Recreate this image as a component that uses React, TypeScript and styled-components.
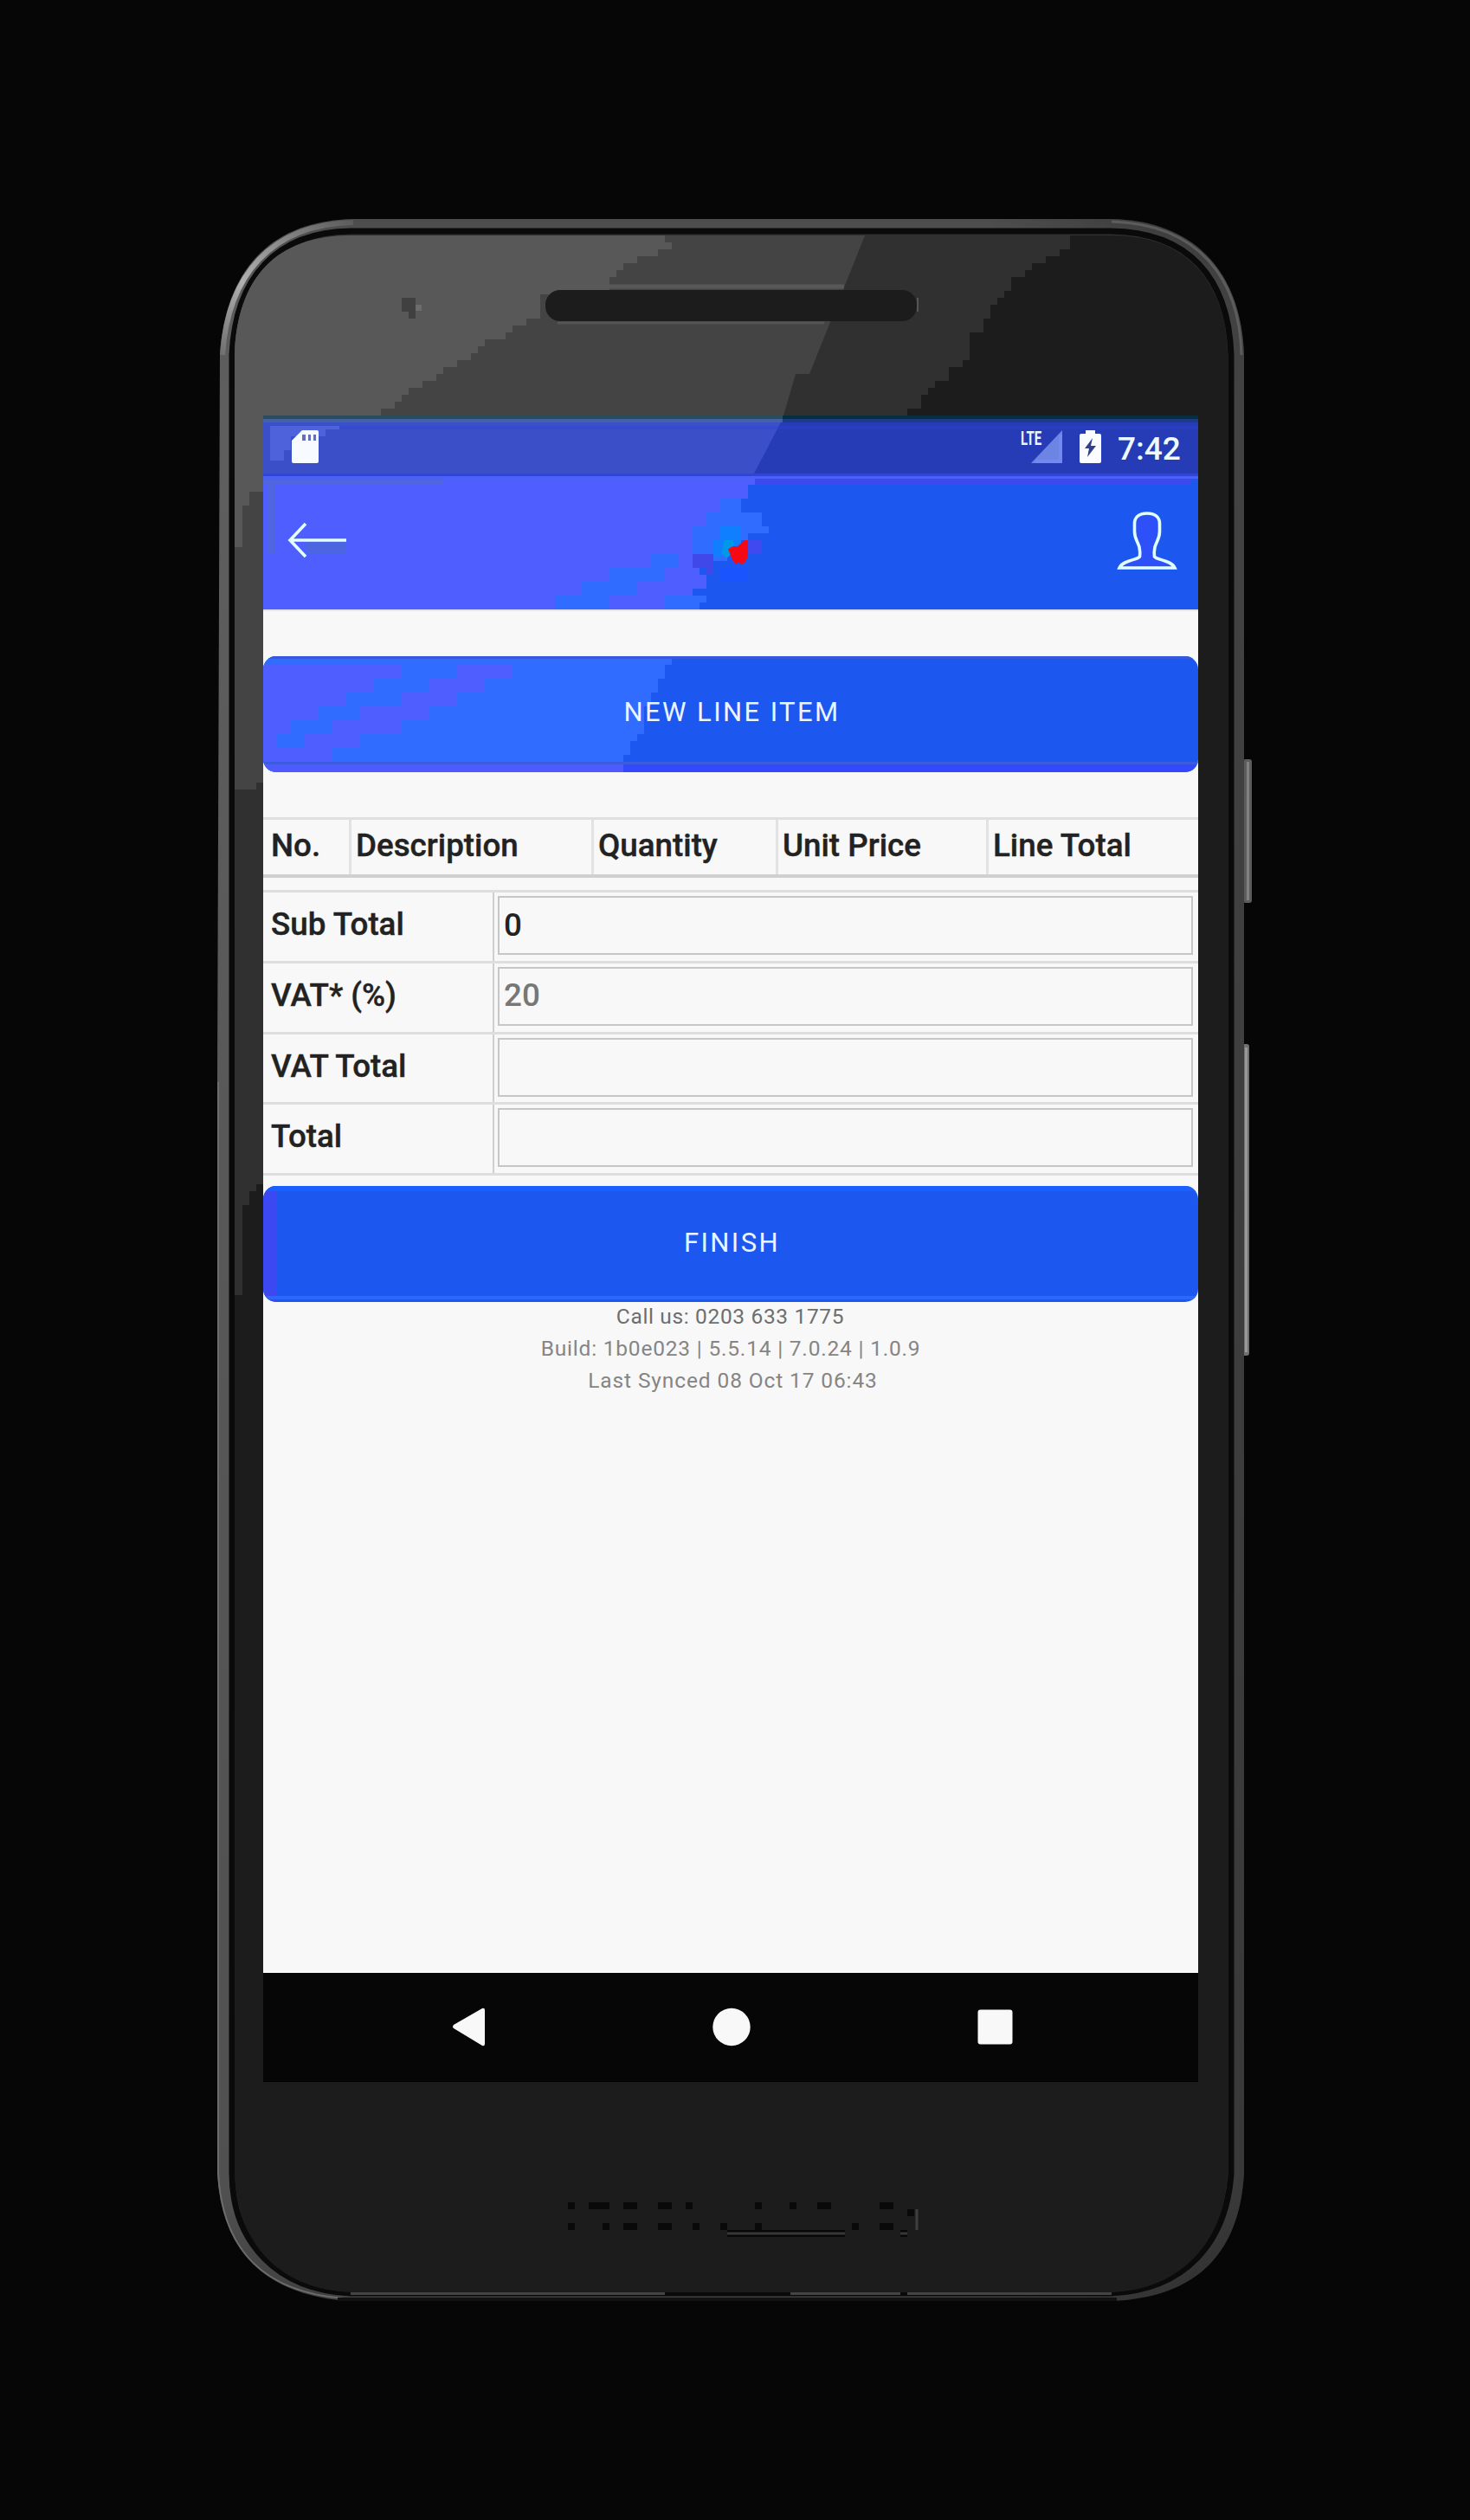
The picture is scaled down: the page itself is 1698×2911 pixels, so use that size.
import React from 'react';
import styled, { createGlobalStyle } from 'styled-components';

const GlobalStyle = createGlobalStyle`
  * { box-sizing: border-box; }
  body { margin: 0; background: #060606; font-family: Roboto, "Liberation Sans", sans-serif; }
`;

const Stage = styled.main`
  position: relative;
  width: 1698px;
  height: 2911px;
  padding: 484px 314px 0 304px;
  background: #060606;
  overflow: hidden;
`;

const DeviceArt = styled.svg`
  position: absolute;
  inset: 0;
  width: 1698px;
  height: 2911px;
`;

const Screen = styled.section`
  position: relative;
  display: flex;
  flex-direction: column;
  width: 1080px;
  height: 1920px;
  background: #f8f8f8;
`;

const Glare = styled.svg`
  position: absolute;
  inset: 0;
  width: 100%;
  height: 100%;
`;

const StatusBar = styled.div`
  position: relative;
  display: flex;
  align-items: flex-start;
  height: 63px;
  padding: 13px 18px 0 33px;
  background: #263bb6;
`;

const StatusIcon = styled.svg<{ $gap: number }>`
  position: relative;
  display: block;
  flex: none;
  margin-right: ${(p) => p.$gap}px;
`;

const Network = styled.span`
  position: relative;
  margin-left: auto;
  width: 12px;
  height: 20px;
  font: 700 22px/20px Roboto, sans-serif;
  color: #e6f6ff;
  white-space: nowrap;
  z-index: 1;
`;

const Condensed = styled.span`
  display: inline-block;
  transform: scaleX(0.68);
  transform-origin: 0 50%;
`;

const Clock = styled.time`
  position: relative;
  width: 75px;
  font: 500 37px/43px Roboto, sans-serif;
  color: #effaff;
  white-space: nowrap;
`;

const Header = styled.header`
  position: relative;
  display: flex;
  align-items: flex-start;
  justify-content: space-between;
  height: 157px;
  padding: 44px 24px 0 28px;
  background: #1c58f0;
`;

const HeaderIcon = styled.svg<{ $drop: number }>`
  position: relative;
  display: block;
  flex: none;
  margin-top: ${(p) => p.$drop}px;
`;

const Body = styled.div`
  display: flex;
  flex: 1;
  flex-direction: column;
  border-top: 2px solid #e6e4ec;
  padding-top: 52px;
`;

const ActionButton = styled.button`
  position: relative;
  flex: none;
  width: 100%;
  height: 134px;
  padding: 0;
  border: 0;
  border-radius: 15px;
  overflow: hidden;
  background: #1c58f0;
`;

const ButtonLabel = styled.span<{ $shift?: number }>`
  position: relative;
  top: ${(p) => p.$shift ?? 0}px;
  font: 400 31px/40px Roboto, sans-serif;
  letter-spacing: 2.4px;
  margin-left: 3px;
  color: #eaf6ff;
`;

const LineItems = styled.div`
  display: grid;
  grid-template-columns: 102px 280px 213px 243px 1fr;
  flex: none;
  height: 70px;
  margin: 52px 0 14px;
  border-top: 3px solid #e0e0e0;
  border-bottom: 4px solid #d0d0d0;
`;

const ColumnHead = styled.div`
  padding: 8px 0 0 5px;
  border-right: 3px solid #e2e2e2;
  font: 500 36.75px/43px Roboto, sans-serif;
  -webkit-text-stroke: 0.4px #222;
  color: #222;
  white-space: nowrap;
  &:first-child { padding-left: 9px; }
  &:last-child { border-right: 0; }
`;

const Totals = styled.div`
  display: grid;
  grid-template-rows: repeat(4, 81.75px);
  flex: none;
  height: 330px;
  margin-bottom: 12px;
  border-bottom: 3px solid #dedede;
`;

const TotalRow = styled.label`
  display: grid;
  grid-template-columns: 267px 1fr;
  border-top: 3px solid #dedede;
`;

const TotalLabel = styled.span`
  padding: 15px 0 0 9px;
  border-right: 2px solid #cfcfcf;
  font: 500 36.75px/43px Roboto, sans-serif;
  -webkit-text-stroke: 0.4px #222;
  color: #222;
`;

const Field = styled.input`
  width: calc(100% - 10px);
  height: 68px;
  margin: 4px 6px 5px 4px;
  padding: 0 0 2px 5px;
  border: 2px solid #c6c6c6;
  outline: 0;
  border-radius: 0;
  background: #f8f8f8;
  font: 500 36.75px/43px Roboto, sans-serif;
  color: #222;
  &::placeholder { color: #777; opacity: 1; }
`;

const Footer = styled.footer`
  display: flex;
  flex-direction: column;
  flex: 1;
  align-items: center;
  margin-top: -2px;
`;

const FooterLine = styled.p<{ $tone?: string; $track: number; $nudge: number }>`
  margin: 0 0 0 ${(p) => p.$nudge}px;
  font: 400 24.5px/37px Roboto, sans-serif;
  letter-spacing: ${(p) => p.$track}px;
  color: ${(p) => p.$tone ?? '#858585'};
`;

const NavBar = styled.nav`
  display: flex;
  justify-content: center;
  gap: 260px;
  height: 125px;
  padding-top: 40px;
  background: #060606;
`;

const NavIcon = styled.svg`
  display: block;
  width: 45px;
  height: 45px;
`;

const grille: Array<[number, number, number]> = [
  [656, 2544, 8], [680, 2544, 24], [720, 2544, 16], [760, 2544, 16], [792, 2544, 8],
  [872, 2544, 8], [912, 2544, 8], [944, 2544, 16], [1016, 2544, 16], [1048, 2552, 8],
  [656, 2568, 8], [696, 2568, 8], [720, 2568, 16], [760, 2568, 16], [800, 2568, 8],
  [832, 2568, 8], [872, 2568, 8], [984, 2568, 8], [1016, 2568, 16],
];

function Device() {
  return (
    <DeviceArt viewBox="0 0 1698 2911" aria-hidden="true">
      <defs>
        <linearGradient id="rim" x1="0" y1="0" x2="0" y2="1">
          <stop offset="0" stopColor="#4c4c4c" />
          <stop offset=".03" stopColor="#5a5a5a" />
          <stop offset=".09" stopColor="#5e5e5e" />
          <stop offset=".95" stopColor="#505050" />
          <stop offset="1" stopColor="#404040" />
        </linearGradient>
        <linearGradient id="rimRight" x1="0" y1="0" x2="1" y2="0">
          <stop offset="0" stopColor="#000" stopOpacity="0" />
          <stop offset=".75" stopColor="#000" stopOpacity="0" />
          <stop offset="1" stopColor="#000" stopOpacity=".3" />
        </linearGradient>
        <linearGradient id="leftGlint" x1="0" y1="1" x2="1" y2="0">
          <stop offset="0" stopColor="#707070" />
          <stop offset=".35" stopColor="#b0b0b0" />
          <stop offset="1" stopColor="#5c5c5c" />
        </linearGradient>
      </defs>
      <rect x="1436" y="877" width="10" height="166" rx="3" fill="#5c5c5c" />
      <rect x="1440" y="880" width="3" height="160" fill="#828282" />
      <rect x="1435" y="1206" width="8" height="360" rx="3" fill="#707070" />
      <rect x="1438" y="1210" width="3" height="352" fill="#999" />
      <path d="M408 253H1284C1385 255 1434 320 1437 410V2510C1432 2600 1385 2654 1284 2658H400C305 2650 256 2600 251 2510V1250L254 410C260 315 310 255 408 253Z" fill="url(#rim)" />
      <path d="M408 253H1284C1385 255 1434 320 1437 410V2510C1432 2600 1385 2654 1284 2658H400C305 2650 256 2600 251 2510V1250L254 410C260 315 310 255 408 253Z" fill="url(#rimRight)" />
      <path d="M257 410C263 318 313 259 408 257" fill="none" stroke="url(#leftGlint)" strokeWidth="6" />
      <path d="M252 1250V2510C257 2600 305 2648 398 2655" fill="none" stroke="#6c6c6c" strokeWidth="2" />
      <path d="M1284 256C1385 259 1432 322 1434 410" fill="none" stroke="#5c5c5c" strokeWidth="3" />
      <path d="M405 267H1283C1372 268 1419 320 1422 410V2512C1416 2590 1370 2645 1283 2649H405C320 2645 268 2590 268 2510V410C272 320 320 268 405 267Z" fill="#303030" stroke="#0a0a0a" strokeWidth="7" />
      <path d="M405 2649H768M913 2649H1040M1048 2649H1284" stroke="#444" strokeWidth="4" />
      <path d="M390 2656H1290" stroke="#111" strokeWidth="4" />
      <path d="M405 272H1285C1370 272 1416 325 1418 410V2510C1414 2590 1365 2644 1285 2648H405C320 2644 274 2590 271 2510V410C274 320 320 272 405 272Z" fill="#1c1c1c" />
      <path d="M1236 272H405C320 272 274 320 271 410V1496H280V1392H288V1376H296V1368H304V480H1048V472H1064V456H1072V448H1080V440H1096V424H1112V416H1120V384H1136V368H1144V352H1152V344H1160V336H1168V320H1184V312H1192V304H1208V296H1224V288H1236Z" fill="#303030" />
      <path d="M999 272H405C320 272 274 320 271 410V912H296V904H304V480H905L919 432H935Z" fill="#444" />
      <path d="M768 272H405C320 272 274 320 271 410V632H280V584H288V568H304V480H440V472H456V464H464V456H472V448H488V440H504V432H512V424H528V416H544V408H552V400H560V392H584V384H592V376H608V368H624V340H704V320H712V312H720V304H736V296H760V288H776V280H768Z" fill="#585858" />
      <path d="M644 331H975" stroke="#585858" strokeWidth="5" />
      <path d="M644 373H952" stroke="#555" strokeWidth="3" />
      <rect x="630" y="335" width="429" height="36" rx="17" fill="#1c1c1c" />
      <path d="M1060 344V360" stroke="#555" strokeWidth="2" />
      <path d="M464 344H480V352H480V368H472V360H464Z" fill="#404040" />
      <rect x="480" y="352" width="7" height="7" fill="#6c6c6c" />
      <g fill="#090909">
        {grille.map(([x, y, w]) => <rect key={`${x}-${y}`} x={x} y={y} width={w} height="8" />)}
      </g>
      <path d="M840 2580H976M1040 2580H1048" stroke="#080808" strokeWidth="8" />
      <path d="M840 2580H976M1040 2580H1048" stroke="#363636" strokeWidth="3" />
      <path d="M1059 2552V2576" stroke="#3f3f3f" strokeWidth="3" />
      <rect x="304" y="480" width="600" height="4" fill="#2a4c5c" />
      <rect x="904" y="480" width="480" height="4" fill="#063040" />
      <rect x="304" y="2400" width="1080" height="5" fill="#000" />
    </DeviceArt>
  );
}

const columns = ['No.', 'Description', 'Quantity', 'Unit Price', 'Line Total'];

const totals = [
  { label: 'Sub Total', value: '0' },
  { label: 'VAT* (%)', placeholder: '20' },
  { label: 'VAT Total' },
  { label: 'Total' },
];

export default function App() {
  return (
    <>
      <GlobalStyle />
      <Stage>
        <Device />
        <Screen>
          <StatusBar>
            <Glare viewBox="0 0 1080 63" aria-hidden="true">
              <path d="M0 0H600L567 63H0Z" fill="#3b50c8" />
              <path d="M0 0H600V4H0Z" fill="#46689c" opacity=".8" />
              <path d="M600 0H1080V4H600Z" fill="#1c3c7c" opacity=".8" />
              <path d="M8 8H88V12H72V20H32V36H24V48H8Z" fill="#4e62dc" />
              <path d="M88 8H590V12H88ZM590 8H1080V12H590Z" fill="#3040d4" opacity=".4" />
            </Glare>
            <StatusIcon $gap={0} width="31" height="38" viewBox="0 0 31 38">
              <path d="M12 0H29Q31 0 31 2V36Q31 38 29 38H2Q0 38 0 36V12Z" fill="#f7fbff" />
              <path d="M12 5H16V12H12ZM19 5H22V12H19ZM25 5H28V12H25Z" fill="#6670b8" />
            </StatusIcon>
            <Network><Condensed>LTE</Condensed></Network>
            <StatusIcon $gap={20} width="36" height="38" viewBox="0 0 36 38">
              <path d="M36 0V38H0Z" fill="#6c84e4" />
              <path d="M34 5V36H5" fill="none" stroke="#7488f4" strokeWidth="4" />
            </StatusIcon>
            <StatusIcon $gap={19} width="25" height="38" viewBox="0 0 25 38">
              <path d="M7 0H18V4H23Q25 4 25 6V36Q25 38 23 38H2Q0 38 0 36V6Q0 4 2 4H7Z" fill="#fbfcff" />
              <path d="M15 9L6 21H11L9 31L19 18H13Z" fill="#33408f" />
            </StatusIcon>
            <Clock>7:42</Clock>
          </StatusBar>
          <Header>
            <Glare viewBox="0 0 1080 157" aria-hidden="true">
              <path d="M0 0H568V13H560V29H552V45H544V61H512V93H496V109H504V117H512V133H496V157H0Z" fill="#4e5eff" />
              <path d="M528 29H552V45H576V61H584V69H560V77H536V101H520V93H496V61H512V45H528ZM448 93H480V109H464V125H432V141H400V157H337V141H368V125H400V109H448ZM496 141H512V149H504V157H464V141Z" fill="#306cff" />
              <path d="M496 93H520V117H512V109H496Z" fill="#4048ea" />
              <path d="M5 13H14V92H5ZM0 5H208V13H0Z" fill="#5066e0" />
              <path d="M568 6H1072V13H568Z" fill="#3c48f0" />
              <rect width="1080" height="3" fill="#3044dc" />
              <rect y="3" width="1080" height="3" fill="#4a60f6" />
              <rect x="528" y="109" width="32" height="16" fill="#1a54ff" />
              <path d="M528 61H552V85H530V97H520V77H528Z" fill="#107fff" />
              <path d="M533 77H543V82L540 94L535 98L529 92Z" fill="#0098e8" />
              <path d="M556 77H560V96L556 103L552 105L549 102L546 105L542 100L537 87L543 84L548 84Z" fill="#f60814" />
              <rect x="560" y="77" width="16" height="16" fill="#4048f0" />
            </Glare>
            <HeaderIcon $drop={10} width="68" height="46" viewBox="0 0 68 46">
              <path d="M22 24H68V39H22Z" fill="#4c66e2" />
              <path d="M68 23H3M21 4L3 23L21 42" fill="none" stroke="#e4ffff" strokeWidth="3.6" />
            </HeaderIcon>
            <HeaderIcon $drop={0} width="70" height="68" viewBox="0 0 70 68">
              <path d="M35 2C25 2 20 7 20.500 15L20.500 23C20.500 31 24 34 26 41C27 46 27 49 26.500 52C24 56 7 56 3 65H67C63 56 46 56 43.500 52C43 49 43 46 44 41C46 34 49.500 31 49.500 23V15C50 7 45 2 35 2Z" fill="#2d50f8" stroke="#e2ffff" strokeWidth="3.6" />
            </HeaderIcon>
          </Header>
          <Body>
            <ActionButton type="button">
              <Glare viewBox="0 0 1080 134" aria-hidden="true">
                <path d="M0 0H472V10H464V26H456V42H448V58H440V90H432V98H424V114H416V134H0Z" fill="#306cff" />
                <path d="M0 10H160V26H128V42H96V58H64V74H32V90H16V106H48V90H80V74H112V58H160V42H192V26H224V10H288V26H256V42H224V58H192V74H160V90H112V106H80V122H0Z" fill="#4e5eff" />
                <path d="M0 126H416V134H0Z" fill="#4e5cff" />
                <path d="M416 126H1080V134H416Z" fill="#3448fb" />
                <rect y="122" width="1080" height="3" fill="#3c5ce0" />
                <rect width="1080" height="3" fill="#3558dc" />
              </Glare>
              <ButtonLabel $shift={-2}>NEW LINE ITEM</ButtonLabel>
            </ActionButton>
            <LineItems>
              {columns.map((name) => <ColumnHead key={name}>{name}</ColumnHead>)}
            </LineItems>
            <Totals>
              {totals.map((row) => (
                <TotalRow key={row.label}>
                  <TotalLabel>{row.label}</TotalLabel>
                  <Field defaultValue={row.value} placeholder={row.placeholder} />
                </TotalRow>
              ))}
            </Totals>
            <ActionButton type="button">
              <Glare viewBox="0 0 1080 134" aria-hidden="true">
                <path d="M0 0H15V134H0Z" fill="#3c48f2" />
                <rect width="1080" height="6" fill="#1a60ff" />
                <rect y="127" width="1080" height="4" fill="#2d68fa" />
              </Glare>
              <ButtonLabel $shift={-1}>FINISH</ButtonLabel>
            </ActionButton>
            <Footer>
              <FooterLine $tone="#6e6e6e" $track={0.65} $nudge={-1}>Call us: 0203 633 1775</FooterLine>
              <FooterLine $track={0.8} $nudge={0}>Build: 1b0e023 | 5.5.14 | 7.0.24 | 1.0.9</FooterLine>
              <FooterLine $track={0.88} $nudge={5}>Last Synced 08 Oct 17 06:43</FooterLine>
            </Footer>
          </Body>
          <NavBar>
            <NavIcon viewBox="0 0 45 45"><path d="M7 20Q5 22.500 7 24L40 44Q43 45 43 42V3Q43 0 40 1Z" fill="#f8f8f8" /></NavIcon>
            <NavIcon viewBox="0 0 45 45"><circle cx="23" cy="22.5" r="21.7" fill="#f8f8f8" /></NavIcon>
            <NavIcon viewBox="0 0 45 45"><rect x="2.5" y="2.5" width="40" height="40" rx="3" fill="#f8f8f8" /></NavIcon>
          </NavBar>
        </Screen>
      </Stage>
    </>
  );
}
